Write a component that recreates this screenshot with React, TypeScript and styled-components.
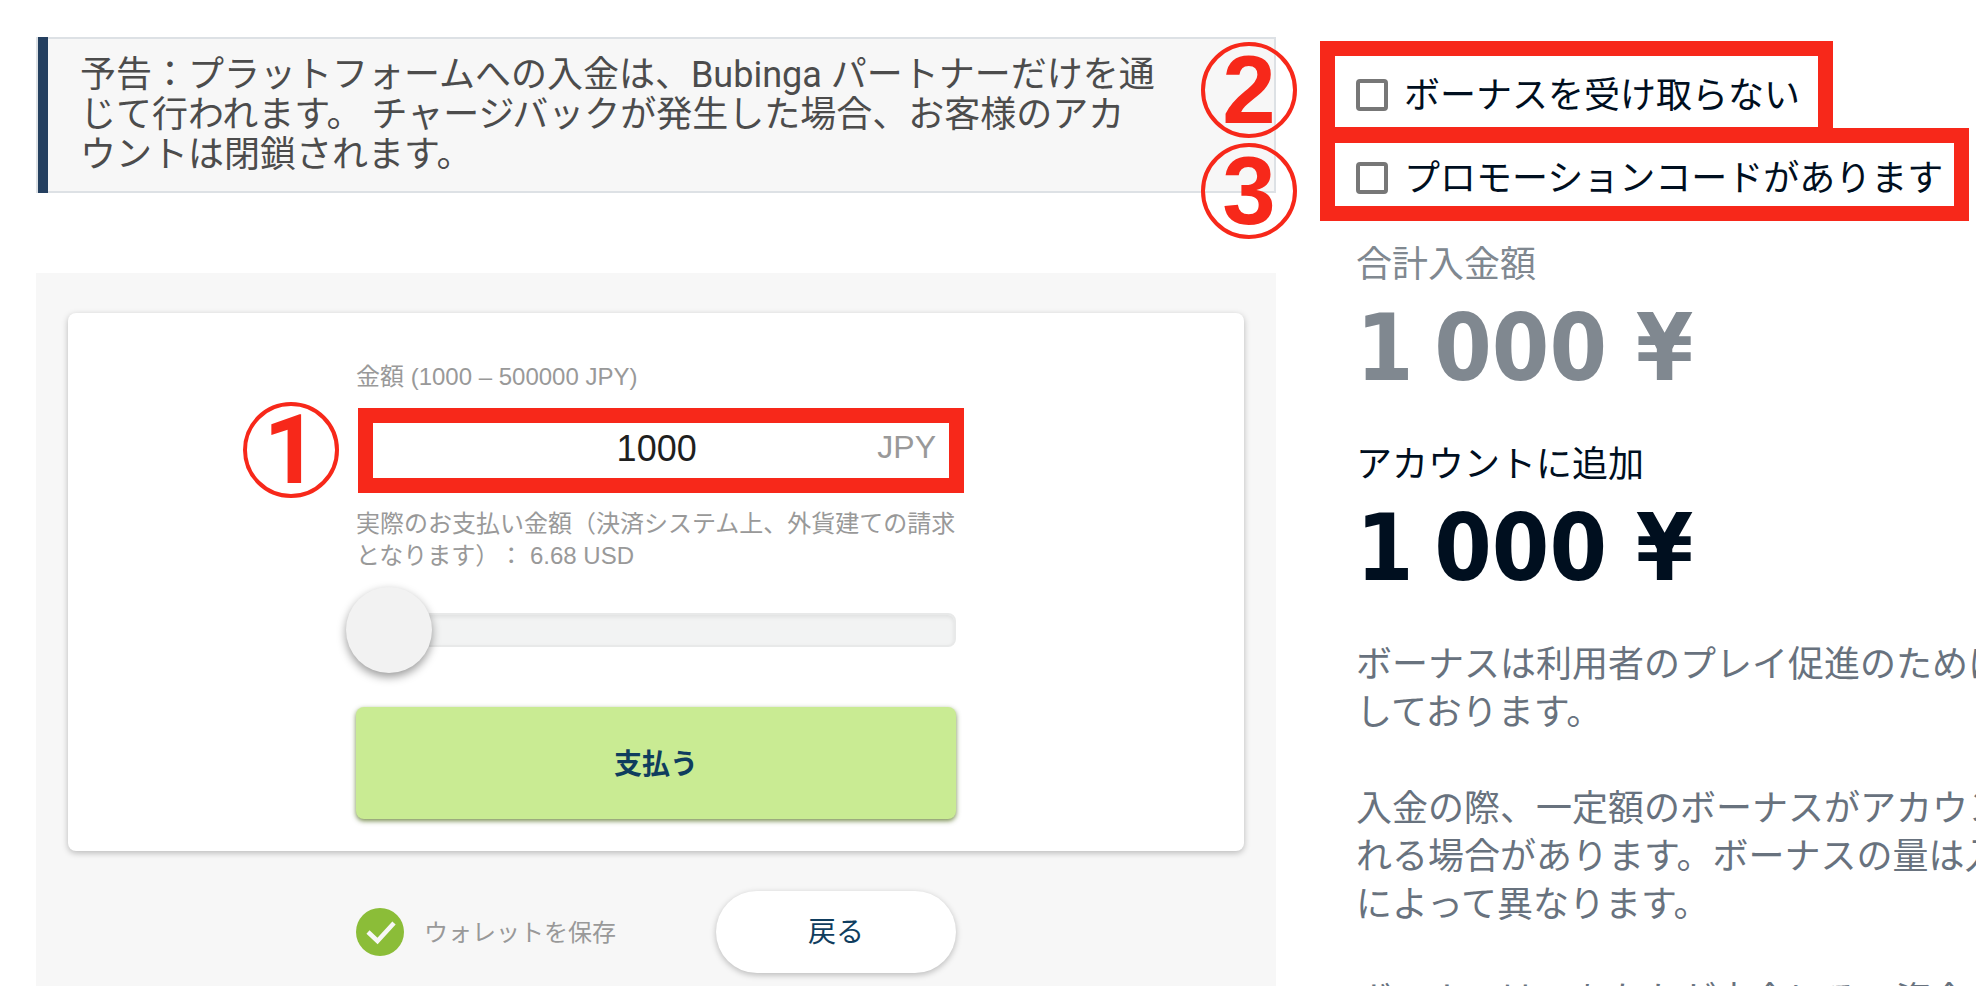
import React from 'react';
import styled, { createGlobalStyle } from 'styled-components';

const red = '#f7281a';
const ui = '"Liberation Sans", "Noto Sans CJK JP", sans-serif';
const body = 'Roboto, "Noto Sans CJK JP", sans-serif';

const GlobalStyle = createGlobalStyle`
  * { box-sizing: border-box; }
  body { margin: 0; background: #fff; overflow: hidden; }
  p { margin: 0; }
`;

const Page = styled.main`
  display: grid;
  grid-template-columns: minmax(0, 1240fr) minmax(0, 656fr);
  column-gap: 44px;
  padding: 37px 0 0 36px;
  height: 100vh;
  overflow: hidden;
  font-family: ${body};
  font-size: 36px;
  text-spacing-trim: space-all;
`;

const Left = styled.section`
  display: flex;
  flex-direction: column;
  gap: 80px;
`;

const NoticeWrap = styled.div`
  position: relative;
`;

const Notice = styled.p`
  padding: 16px 100px 16px 42px;
  border: 2px solid #dde1e5;
  background: #f7f7f7;
  color: #4c4c4c;
  line-height: 40px;

  &::before {
    content: '';
    position: absolute;
    top: 0;
    bottom: 0;
    left: 2px;
    width: 10px;
    background: #254060;
  }
`;

const Badges = styled.div`
  position: absolute;
  top: 5px;
  right: -21px;
  display: flex;
  flex-direction: column;
  gap: 5px;
`;

const Badge = styled.span<{ $face?: string }>`
  display: flex;
  align-items: center;
  justify-content: center;
  width: 96px;
  height: 96px;
  border: 4px solid ${red};
  border-radius: 50%;
  color: ${red};
  font: 700 96px/88px ${(p) => p.$face ?? ui};
`;

const Panel = styled.div`
  flex: 1;
  padding: 40px 32px 0;
  background: #f7f7f7;
  font-family: ${ui};
  font-size: 24px;
  color: #999;
`;

const Card = styled.form`
  display: flex;
  flex-direction: column;
  align-items: center;
  padding: 48px 24px 32px;
  border-radius: 8px;
  background: #fff;
  box-shadow: 0 2px 6px rgba(0, 0, 0, 0.25);
`;

const Fields = styled.div`
  display: flex;
  flex-direction: column;
  width: 600px;
  max-width: 100%;
  line-height: 32px;
`;

const AmountRow = styled.div`
  position: relative;
  margin: 15px -8px 15px 2px;
`;

const StepOne = styled.div`
  position: absolute;
  top: -6px;
  left: -115px;
`;

const AmountBox = styled.div`
  display: flex;
  align-items: center;
  height: 85px;
  padding: 0 13px 4px;
  border: 15px solid ${red};
`;

const AmountInput = styled.input`
  flex: 1;
  min-width: 0;
  padding: 0 0 0 50px;
  border: 0;
  outline: 0;
  background: transparent;
  color: #1f1f1f;
  text-align: center;
  font: 36px/40px ${ui};
`;

const Currency = styled.span`
  padding-bottom: 4px;
  font-size: 32px;
`;

const Slider = styled.input`
  appearance: none;
  height: 88px;
  margin: 14px 0 33px -10px;
  background: transparent;

  &::-webkit-slider-runnable-track {
    height: 34px;
    margin-left: 10px;
    border: 2px solid #e8e9e9;
    border-radius: 8px;
    background: #f2f3f3;
    box-shadow: inset 0 2px 4px rgba(0, 0, 0, 0.08);
  }

  &::-webkit-slider-thumb {
    appearance: none;
    width: 86px;
    height: 86px;
    margin-top: -28px;
    margin-left: -12px;
    border-radius: 50%;
    background: #f2f2f2;
    box-shadow: 0 4px 10px rgba(0, 0, 0, 0.4);
  }
`;

const PayButton = styled.button`
  height: 112px;
  padding: 4px 0 0;
  border: 0;
  border-radius: 8px;
  background: #c9eb93;
  box-shadow: 0 2px 5px rgba(60, 90, 0, 0.7);
  color: #0f3d5e;
  font: 700 28px/32px ${ui};
`;

const Actions = styled.div`
  display: flex;
  align-items: center;
  justify-content: space-between;
  width: 600px;
  max-width: 100%;
  margin: 40px auto 0;
`;

const SaveWallet = styled.label`
  display: flex;
  align-items: center;
  gap: 20px;
`;

const SaveText = styled.span`
  padding-bottom: 4px;
`;

const RoundCheck = styled.span`
  position: relative;
  display: flex;
  width: 48px;
  height: 48px;

  input {
    appearance: none;
    width: 48px;
    height: 48px;
    margin: 0;
    border-radius: 50%;
    background: #8bbd38;
  }

  svg {
    position: absolute;
    inset: 0;
    pointer-events: none;
  }
`;

const BackButton = styled.button`
  width: 240px;
  height: 82px;
  padding: 2px 0 0;
  border: 0;
  border-radius: 41px;
  background: #fff;
  box-shadow: 0 2px 6px rgba(0, 0, 0, 0.25);
  color: #0f3d5e;
  font: 28px/32px ${ui};
`;

const Right = styled.section`
  display: flex;
  flex-direction: column;
  align-items: flex-start;
  min-width: 0;
  padding-top: 4px;
`;

const Option = styled.label<{ $tall?: boolean }>`
  display: flex;
  align-items: center;
  gap: 16px;
  height: ${(p) => (p.$tall ? 101 : 93)}px;
  margin-top: ${(p) => (p.$tall ? 0 : -14)}px;
  padding: 6px ${(p) => (p.$tall ? 18 : 11)}px 0 21px;
  border: 15px solid ${red};
  color: #000f1f;
  white-space: nowrap;
`;

const OptionText = styled.span`
  padding-bottom: 6px;
`;

const Checkbox = styled.input`
  appearance: none;
  width: 32px;
  height: 32px;
  margin: 0;
  border: 4px solid #777;
  border-radius: 4px;
  background: #fff;
`;

const Summary = styled.dl`
  margin: 20px 0 0 36px;
`;

const Term = styled.dt<{ $muted?: boolean }>`
  color: ${(p) => (p.$muted ? '#808890' : '#000f1f')};
  line-height: 48px;
`;

const Sum = styled.dd<{ $muted?: boolean }>`
  margin: 0;
  padding: 4px 0 36px;
  color: ${(p) => (p.$muted ? '#808890' : '#000f1f')};
  font: 700 92px/112px "DejaVu Sans Condensed", "DejaVu Sans", sans-serif;
  white-space: nowrap;
`;

const Terms = styled.div`
  display: flex;
  flex-direction: column;
  gap: 48px;
  margin-left: 36px;
  color: #68727e;
  line-height: 48px;
  white-space: pre;
`;

/* Groups thousands with a quarter-em space. */
const formatYen = (value: number) =>
  `${String(value).replace(/\B(?=(\d{3})+$)/g, '\u2005')} ¥`;

export default function App() {
  return (
    <>
      <GlobalStyle />
      <Page>
        <Left>
          <NoticeWrap>
            <Notice>
              予告：プラットフォームへの入金は、Bubinga パートナーだけを通
              <br />
              じて行われます。 チャージバックが発生した場合、お客様のアカ
              <br />
              ウントは閉鎖されます。
            </Notice>
            <Badges>
              <Badge>2</Badge>
              <Badge>3</Badge>
            </Badges>
          </NoticeWrap>
          <Panel>
            <Card>
              <Fields>
                <label htmlFor="amount">金額 (1000 – 500000 JPY)</label>
                <AmountRow>
                  <StepOne>
                    <Badge $face={body}>1</Badge>
                  </StepOne>
                  <AmountBox>
                    <AmountInput id="amount" defaultValue="1000" />
                    <Currency>JPY</Currency>
                  </AmountBox>
                </AmountRow>
                <p>実際のお支払い金額（決済システム上、外貨建ての請求となります）： 6.68 USD</p>
                <Slider type="range" min="1000" max="500000" defaultValue="1000" aria-label="金額" />
                <PayButton type="button">支払う</PayButton>
              </Fields>
            </Card>
            <Actions>
              <SaveWallet>
                <RoundCheck>
                  <input type="checkbox" defaultChecked />
                  <svg viewBox="0 0 48 48" aria-hidden="true">
                    <path d="M12 24l9.500 9L38 15" fill="none" stroke="#f7f7f7" strokeWidth="4.500" />
                  </svg>
                </RoundCheck>
                <SaveText>ウォレットを保存</SaveText>
              </SaveWallet>
              <BackButton type="button">戻る</BackButton>
            </Actions>
          </Panel>
        </Left>
        <Right>
          <Option $tall>
            <Checkbox type="checkbox" />
            <OptionText>ボーナスを受け取らない</OptionText>
          </Option>
          <Option>
            <Checkbox type="checkbox" />
            <OptionText>プロモーションコードがあります</OptionText>
          </Option>
          <Summary>
            <Term $muted>合計入金額</Term>
            <Sum $muted>{formatYen(1000)}</Sum>
            <Term>アカウントに追加</Term>
            <Sum>{formatYen(1000)}</Sum>
          </Summary>
          <Terms>
            <p>{'ボーナスは利用者のプレイ促進のために\nしております。'}</p>
            <p>{'入金の際、一定額のボーナスがアカウント\nれる場合があります。ボーナスの量は入金\nによって異なります。'}</p>
            <p>ボーナスは、あなたが完全にその資金</p>
          </Terms>
        </Right>
      </Page>
    </>
  );
}
